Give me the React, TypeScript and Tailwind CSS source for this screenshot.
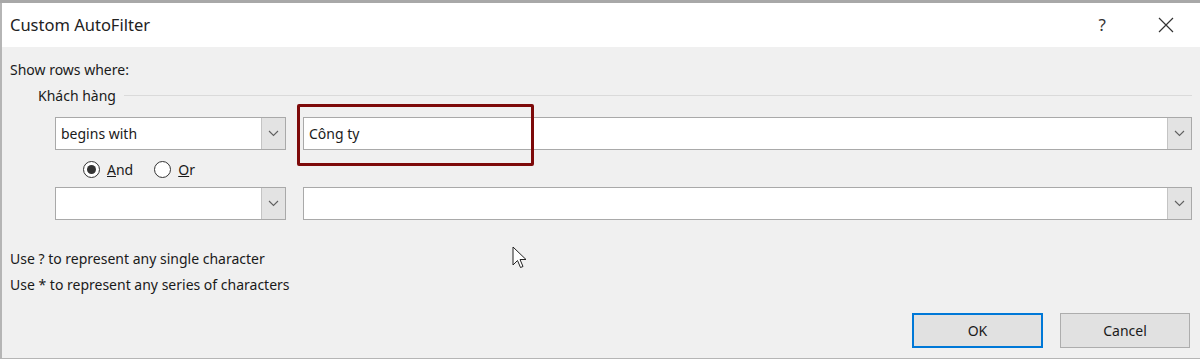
import React from 'react';

const font = { fontFamily: '"Noto Sans", "Liberation Sans", sans-serif' };

const Chevron = () => (
  <svg width="11" height="7" viewBox="0 0 11 7" className="text-[#606060]">
    <path d="M1 1l4.5 4.5L10 1" fill="none" stroke="currentColor" strokeWidth="1.1" />
  </svg>
);

const Combo = ({ value, className = '' }: { value?: string; className?: string }) => (
  <div className={`flex h-[33px] border border-[#a9a9a9] bg-white ${className}`}>
    <div className="flex-1 flex items-center pl-[5px] text-[14px] text-[#1a1a1a]">{value}</div>
    <div className="w-[24px] flex items-center justify-center bg-[#e3e3e3] border-l border-[#c4c4c4]">
      <Chevron />
    </div>
  </div>
);

const Radio = ({ checked, label }: { checked?: boolean; label: React.ReactNode }) => (
  <div className="flex items-center gap-[7px]">
    <div className="w-[17px] h-[17px] rounded-full border border-[#333] bg-white flex items-center justify-center">
      {checked && <div className="w-[9px] h-[9px] rounded-full bg-[#333]" />}
    </div>
    <span className="text-[14px] text-[#1a1a1a]">{label}</span>
  </div>
);

export default function App() {
  return (
    <div className="w-[1200px] h-[359px] overflow-hidden bg-[#f0f0f0] flex flex-col" style={font}>
      <div className="h-[3px] bg-[#a8a8a8] shrink-0" />
      <div className="flex-1 flex flex-col border-l-2 border-b border-[#b5b5b5] relative">
        {/* title bar */}
        <div className="h-[44px] bg-white flex items-center pl-[8px] shrink-0">
          <span className="text-[16.5px] text-[#222]">Custom AutoFilter</span>
          <div className="ml-auto flex items-center">
            <span className="text-[17px] text-[#333] mr-[52px]">?</span>
            <svg width="16" height="16" viewBox="0 0 16 16" className="mr-[26px]">
              <path d="M1 1l14 14M15 1L1 15" stroke="#333" strokeWidth="1.2" />
            </svg>
          </div>
        </div>

        {/* body */}
        <div className="flex-1 flex flex-col pl-[8px] pr-[8px]">
          <div className="mt-[13px] text-[14px] leading-[20px] text-[#1a1a1a]">Show rows where:</div>
          <div className="mt-[6px] flex items-center pl-[28px]">
            <span className="text-[14px] leading-[20px] text-[#1a1a1a]">Khách hàng</span>
            <div className="flex-1 h-px bg-[#dadada] ml-[8px] mt-[-2px]" />
          </div>

          <div className="mt-[11px] flex pl-[45px]">
            <Combo value="begins with" className="w-[231px]" />
            <Combo value="Công ty" className="ml-[17px] flex-1" />
          </div>

          <div className="mt-[11px] flex items-center gap-[21px] pl-[73px] h-[17px]">
            <Radio checked label={<><span className="underline">A</span>nd</>} />
            <Radio label={<><span className="underline">O</span>r</>} />
          </div>

          <div className="mt-[9px] flex pl-[45px]">
            <Combo className="w-[231px]" />
            <Combo className="ml-[17px] flex-1" />
          </div>

          <div className="mt-[29px] text-[14px] leading-[20px] text-[#1a1a1a]">Use ? to represent any single character</div>
          <div className="mt-[6px] text-[14px] leading-[20px] text-[#1a1a1a]">Use * to represent any series of characters</div>

          <div className="mt-auto mb-[10px] flex justify-end gap-[17px] pr-[2px]">
            <button className="w-[131px] h-[35px] bg-[#e1e1e1] border-2 border-[#0078d7] text-[14px] text-[#1a1a1a]">OK</button>
            <button className="w-[130px] h-[35px] bg-[#e1e1e1] border border-[#adadad] text-[14px] text-[#1a1a1a]">Cancel</button>
          </div>
        </div>

        {/* highlight rectangle */}
        <div className="absolute left-[295px] top-[101px] w-[237px] h-[62px] border-[3px] border-[#7d0a0a] rounded-[2px]" />

        {/* mouse pointer */}
        <svg className="absolute left-[510px] top-[243px]" width="15" height="24" viewBox="0 0 15 24">
          <path d="M1 1v18l4.5-4.5 3 7 2.5-1-3-7H14z" fill="#fff" stroke="#222" strokeWidth="1" />
        </svg>
      </div>
    </div>
  );
}
